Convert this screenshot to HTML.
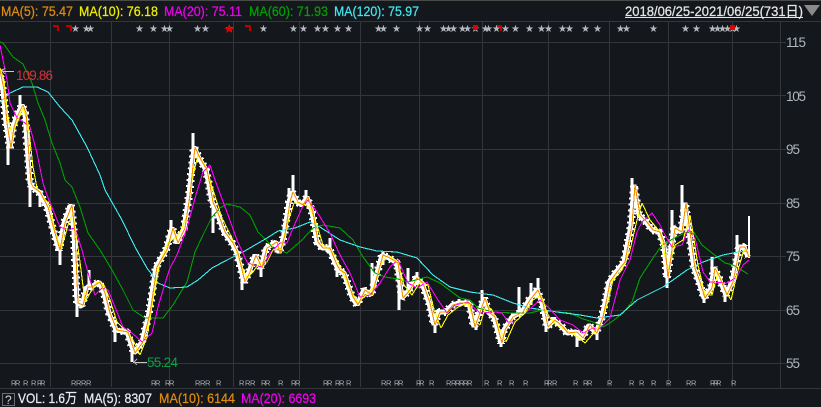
<!DOCTYPE html>
<html><head><meta charset="utf-8"><style>
html,body{margin:0;padding:0;background:#14171c;width:821px;height:407px;overflow:hidden}
svg{display:block;font-family:"Liberation Sans","Noto Sans CJK SC",sans-serif}
</style></head><body>
<svg width="821" height="407" viewBox="0 0 821 407" xmlns="http://www.w3.org/2000/svg">
<rect width="821" height="407" fill="#14171c"/>
<rect width="821" height="1" fill="#4a4a4a"/>
<g shape-rendering="crispEdges" stroke="#33363a" stroke-width="1" fill="none">
<path d="M0 21.5H821M0 388.5H821"/>
<path d="M0 42.5H786M0 95.5H786M0 149.5H786M0 203.5H786M0 256.5H786M0 310.5H786M0 363.5H786"/>
<path d="M50.5 21V387M111.5 21V387M169.5 21V387M233.5 21V387M299.5 21V387M360.5 21V387M419.5 21V387M482.5 21V387M548.5 21V387M609.5 21V387M668.5 21V387M732.5 21V387M780.5 21V388"/>
</g>
<defs>
<polyline id="p5" points="0,70 4,90 7,123 11,148 14,127 18,115 23,105 26,113 29,157 31,183 33,187 40,192 48,207 55,233 60,250 65,223 72,205 75,233 78,303 83,305 88,287 92,287 100,282 105,293 110,313 117,330 128,332 135,353 143,342 150,313 157,267 167,250 173,228 178,243 185,228 190,195 195,147 200,158 207,170 210,185 213,202 218,213 225,232 233,243 238,253 245,282 250,272 256,255 262,268 267,248 277,242 280,253 285,235 290,202 293,192 298,202 303,205 308,197 313,212 318,242 323,248 330,248 337,265 340,270 345,273 353,297 358,305 365,290 372,295 377,277 383,255 390,258 398,263 403,298 410,290 417,278 423,283 430,303 435,325 440,312 447,312 453,305 460,303 470,303 475,327 485,298 490,313 495,317 502,343 505,330 513,317 523,312 530,300 538,290 543,303 548,327 555,320 563,327 568,333 577,332 583,338 590,325 597,333 603,317 607,298 610,282 617,272 625,262 632,225 635,185 640,215 647,222 653,230 660,232 665,245 668,278 675,228 682,232 686,203 690,232 695,268 700,282 705,298 712,288 715,268 720,278 727,295 733,282 740,247 745,247 749,257"/>
</defs>
<g fill="none" shape-rendering="crispEdges" stroke-linejoin="bevel">
<use href="#p5" stroke="#fff" stroke-width="5" transform="translate(-1,0)"/>
<use href="#p5" stroke="#fff" stroke-width="8" stroke-dasharray="2 4" transform="translate(-1,0)"/>
<path stroke="#fff" stroke-width="3" d="M8 165V125M20 95V115M30 207V170M40 207V190M60 265V240M77 317V290M89 270V290M115 342V320M132 362V340M171 220V240M193 133V160M213 233V205M242 290V270M261 277V260M293 175V195M289 188V205M306 190V205M330 238V250M337 277V260M372 263V295M383 252V265M399 310V280M408 268V290M417 272V285M435 333V315M482 290V305M476 330V315M501 347V330M519 287V315M531 283V305M538 278V295M546 332V315M577 347V330M597 340V330M608 283V300M632 178V225M672 210V235M682 185V225M667 288V260M704 303V290M712 257V285M725 302V285M737 235V255"/>
<path stroke="#fff" stroke-width="2" d="M749 216V258"/>
<polyline stroke="#00a000" stroke-width="1.1" points="0,42 3,43 13,57 23,64 32,83 38,103 45,120 52,143 60,163 65,180 72,187 80,207 88,233 100,250 112,270 123,290 133,310 145,318 163,318 173,305 187,282 195,252 203,235 212,217 220,208 227,204 240,207 250,215 258,232 268,242 273,248 287,253 302,240 313,228 323,225 340,228 353,240 363,257 375,273 385,277 398,279 408,282 427,277 440,283 460,298 470,300 478,308 493,312 513,313 530,313 542,310 557,312 570,313 583,319 593,322 603,327 610,323 623,313 632,302 640,278 653,258 662,245 680,235 693,231 702,245 712,253 725,263 733,265 748,274"/>
<polyline stroke="#40f0f0" stroke-width="1.1" points="0,102 10,93 23,87 37,87 48,92 60,107 72,120 87,147 100,175 105,190 122,220 135,247 147,268 158,283 170,288 187,287 198,280 212,268 227,260 243,252 267,238 278,231 295,228 310,222 320,227 340,240 360,247 377,251 397,252 417,258 433,275 450,287 470,292 493,295 513,303 530,308 557,312 580,315 597,318 620,315 637,300 663,287 687,270 703,262 723,255 743,251 749,252"/>
<polyline stroke="#ff00ff" stroke-width="1.1" points="0,45 7,80 10,103 17,118 25,123 30,127 37,153 43,183 47,195 53,210 60,227 68,230 75,228 82,250 90,280 95,295 102,288 108,290 115,307 123,327 132,333 142,342 152,333 158,307 167,277 170,268 177,255 187,228 195,198 203,172 210,165 215,180 228,215 237,240 247,262 253,265 262,267 270,253 280,243 287,243 293,228 302,208 308,200 317,212 330,233 340,255 350,273 360,297 370,295 380,283 390,267 398,260 408,283 417,288 427,282 438,300 447,313 455,305 468,302 480,313 495,312 502,313 508,322 515,322 525,313 540,300 548,307 560,320 573,325 583,333 593,328 598,330 610,318 620,280 630,260 637,232 642,222 652,213 660,225 665,235 672,247 682,245 688,230 695,238 703,272 710,282 727,283 737,277 743,265 749,260"/>
<polyline stroke="#ffff00" stroke-width="1.1" points="0,68 4,80 8,117 12,135 17,123 23,108 28,123 33,167 37,188 43,197 50,205 56,235 61,250 68,225 73,213 80,262 85,302 90,293 97,282 104,285 110,300 117,322 125,330 133,340 140,355 147,337 153,300 160,262 168,243 176,237 181,230 187,215 192,180 198,155 205,165 213,190 222,218 232,238 240,262 247,278 253,272 260,262 267,262 273,250 281,248 288,222 294,203 302,203 310,208 317,225 323,245 333,252 341,268 349,287 358,303 366,295 374,287 380,265 388,255 398,262 404,285 412,295 420,282 428,285 434,310 441,328 448,315 458,307 468,303 474,320 480,325 486,305 492,310 500,330 506,342 515,322 525,313 533,300 541,295 548,315 556,325 566,330 578,337 585,343 592,335 600,325 607,305 613,280 622,270 630,250 637,220 642,203 650,220 660,232 668,270 675,245 683,240 690,215 698,265 705,295 712,295 718,272 725,290 731,300 738,270 744,250 749,252"/>
<use href="#p5" stroke="#f09000" stroke-width="1.1"/>
<path stroke="#c8c8c8" stroke-width="1" d="M2 71.5H14M133 362.5H147"/>
<path stroke="#aaa" stroke-width="1" d="M5 68L2 71L5 74M137 359L134 362L137 365"/>
<path stroke="#c00000" stroke-width="2" d="M53 26H58V31M66 26H71V31M245 26H250V31M496 26H501V31"/>
</g>
<g font-size="14" stroke-width="0.25">
<text x="1" y="16" fill="#e08a10" stroke="#e08a10" textLength="72" lengthAdjust="spacingAndGlyphs">MA(5): 75.47</text>
<text x="79" y="16" fill="#f0f000" stroke="#f0f000" textLength="79" lengthAdjust="spacingAndGlyphs">MA(10): 76.18</text>
<text x="164" y="16" fill="#f000f0" stroke="#f000f0" textLength="78" lengthAdjust="spacingAndGlyphs">MA(20): 75.11</text>
<text x="249" y="16" fill="#00a000" stroke="#00a000" textLength="79" lengthAdjust="spacingAndGlyphs">MA(60): 71.93</text>
<text x="334" y="16" fill="#40e8f0" stroke="#40e8f0" textLength="85" lengthAdjust="spacingAndGlyphs">MA(120): 75.97</text>
<text x="625" y="16" fill="#e6e6e6" stroke="#e6e6e6" textLength="178" lengthAdjust="spacingAndGlyphs">2018/06/25-2021/06/25(731日)</text>
</g>
<rect x="625" y="17" width="178" height="1" fill="#e6e6e6"/>
<polygon points="804,5 820,5 812,16" fill="#8a8a8a"/>
<g font-size="13.5" fill="#aeb6be">
<text x="786" y="47" textLength="20">115</text>
<text x="786" y="101" textLength="20">105</text>
<text x="786" y="154" textLength="14">95</text>
<text x="786" y="208" textLength="14">85</text>
<text x="786" y="261" textLength="14">75</text>
<text x="786" y="315" textLength="14">65</text>
<text x="786" y="368" textLength="14">55</text>
</g>
<text x="16" y="80" font-size="13.5" fill="#d8303a" textLength="37">109.86</text>
<text x="147" y="367" font-size="13.5" fill="#10a048" textLength="31">55.24</text>
<text font-size="10" fill="#b4b8be" font-family="'DejaVu Sans',sans-serif" y="32" x="71 82 86 135 149 160 165 193 201 225 259 289 299 313 321 333 344 374 379 392 415 423 439 444 449 458 463 471 481 484 492 501 511 525 537 544 558 565 581 593 616 622 649 681 692 708 713 718 723 728 732">★★★★★★★★★★★★★★★★★★★★★★★★★★★★★★★★★★★★★★★★★★★★★★★★★★★</text>
<g fill="#e00000">
<polygon points="229,25 231,28 234,28 231,30 232,33 229,31 226,33 227,30 224,28 227,28"/>
<rect x="473" y="25" width="5" height="5"/>
<rect x="730" y="25" width="5" height="5"/>
</g>
<text font-size="7.5" fill="#aab0b6" y="385.5" x="11 15 23 31 37 40 71 76 81 86 151 155 165 169 195 200 205 216 239 245 250 261 265 278 291 295 323 327 335 339 346 381 386 394 398 416 419 429 446 451 455 459 463 467 484 497 509 523 544 547 552 573 583 587 607 629 639 651 666 686 691 710 713 716 731">RRRRRRRRRRRRRRRRRRRRRRRRRRRRRRRRRRRRRRRRRRRRRRRRRRRRRRRRRRRRRRRRR</text>
<rect x="2.5" y="393.5" width="12" height="12" fill="none" stroke="#6a6e72" shape-rendering="crispEdges"/>
<text x="5" y="404" font-size="12" fill="#d8d8d8">?</text>
<g font-size="14" stroke-width="0.25">
<text x="18" y="403" fill="#e8ecf4" stroke="#e8ecf4" textLength="59" lengthAdjust="spacingAndGlyphs">VOL: 1.6万</text>
<text x="84" y="403" fill="#e8ecf4" stroke="#e8ecf4" textLength="68" lengthAdjust="spacingAndGlyphs">MA(5): 8307</text>
<text x="159" y="403" fill="#e08a10" stroke="#e08a10" textLength="76" lengthAdjust="spacingAndGlyphs">MA(10): 6144</text>
<text x="241" y="403" fill="#f000f0" stroke="#f000f0" textLength="75" lengthAdjust="spacingAndGlyphs">MA(20): 6693</text>
</g>
</svg>
</body></html>
